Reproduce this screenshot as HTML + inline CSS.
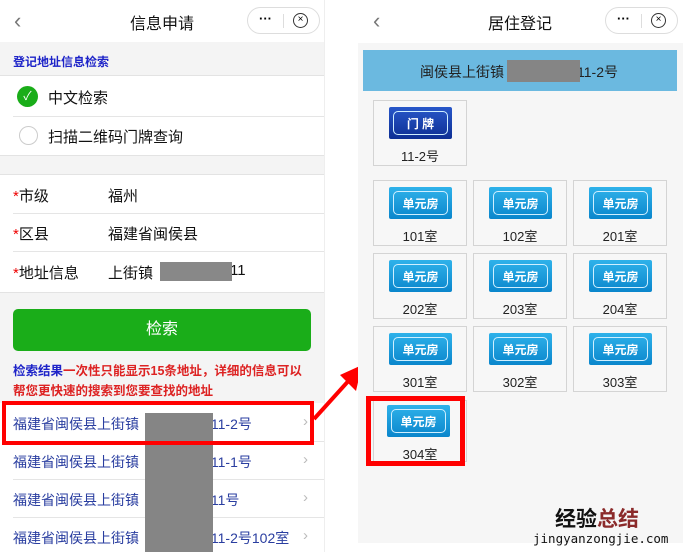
<!DOCTYPE html>
<html><head><meta charset="utf-8"><style>
*{margin:0;padding:0;box-sizing:border-box}
body{width:683px;height:552px;overflow:hidden;background:#fff;font-family:"Liberation Sans","Noto Sans CJK SC",sans-serif;position:relative}
.a{position:absolute}
.t{white-space:nowrap}
.cap{position:absolute;border:1px solid #ddd;border-radius:14px;width:73px;height:27px;top:7px;background:#fff}
.tile{position:absolute;width:94px;height:66px;border:1px solid #d4d4d4;background:#f7f7f7}
.tile .s{position:absolute;left:15px;top:6px;width:63px;height:32px;background:linear-gradient(#2fb2ea,#0a86cc);border-radius:2px}
.tile .s i{position:absolute;left:4px;top:4px;right:4px;bottom:4px;border:1px solid #cfefff;border-radius:5px}
.tile .s b{position:absolute;width:100%;top:8px;text-align:center;color:#fff;font-size:12px}
.tile .l{position:absolute;width:100%;top:45px;text-align:center;font-size:13px;color:#222}
.li{position:absolute;left:13px;font-size:14px;color:#2a3ea0}
.chev{position:absolute;left:303px;color:#bbb;font-size:15px}
.hr{position:absolute;height:1px;background:#e5e5e5}
</style></head><body>
<!-- left -->
<div class="a t" style="left:14px;top:8px;font-size:22px;color:#777">‹</div>
<div class="a t" style="left:130px;top:10px;font-size:16px;color:#111">信息申请</div>
<div class="cap" style="left:247px"><span class="a" style="left:11px;top:3px;font-size:13px;font-weight:bold">···</span><span class="a" style="left:35px;top:6px;width:1px;height:14px;background:#ddd"></span><span class="a" style="left:45px;top:5px;width:15px;height:15px;border:1.5px solid #333;border-radius:50%;font-size:10px;text-align:center;line-height:12px">×</span></div>
<div class="a" style="left:0;top:42px;width:324px;height:34px;background:#f4f4f4;border-bottom:1px solid #e3e3e3"></div>
<div class="a t" style="left:13px;top:53px;font-size:12px;color:#1d23c8;font-weight:bold">登记地址信息检索</div>
<div class="a" style="left:17px;top:86px;width:21px;height:21px;border-radius:50%;background:#1aad19;color:#fff;font-size:12px;text-align:center;line-height:21px">✓</div>
<div class="a t" style="left:48px;top:87px;font-size:15px;color:#111">中文检索</div>
<div class="hr" style="left:13px;top:116px;width:311px"></div>
<div class="a" style="left:19px;top:126px;width:19px;height:19px;border-radius:50%;border:1px solid #ccc"></div>
<div class="a t" style="left:48px;top:126px;font-size:15px;color:#111">扫描二维码门牌查询</div>
<div class="a" style="left:0;top:155px;width:324px;height:20px;background:#f4f4f4;border-top:1px solid #e3e3e3;border-bottom:1px solid #e3e3e3"></div>
<div class="a t" style="left:13px;top:185px;font-size:15px;color:#111"><span style="color:#e00">*</span>市级</div>
<div class="a t" style="left:108px;top:185px;font-size:15px;color:#111">福州</div>
<div class="hr" style="left:13px;top:213px;width:311px"></div>
<div class="a t" style="left:13px;top:223px;font-size:15px;color:#111"><span style="color:#e00">*</span>区县</div>
<div class="a t" style="left:108px;top:223px;font-size:15px;color:#111">福建省闽侯县</div>
<div class="hr" style="left:13px;top:251px;width:311px"></div>
<div class="a t" style="left:13px;top:262px;font-size:15px;color:#111"><span style="color:#e00">*</span>地址信息</div>
<div class="a t" style="left:108px;top:262px;font-size:15px;color:#111">上街镇</div>
<div class="a t" style="left:230px;top:262px;font-size:15px;color:#111">11</div>
<div class="a" style="left:160px;top:262px;width:72px;height:19px;background:#888"></div>
<div class="a" style="left:0;top:292px;width:324px;height:111px;background:#f4f4f4;border-top:1px solid #e3e3e3"></div>
<div class="a" style="left:13px;top:309px;width:298px;height:42px;background:#1aad19;border-radius:5px;color:#fff;font-size:16px;text-align:center;line-height:42px">检索</div>
<div class="a t" style="left:13px;top:361px;font-size:12.5px;color:#d22;line-height:20px;font-weight:bold"><span style="color:#1d23c8">检索结果</span>一次性只能显示15条地址，详细的信息可以<br>帮您更快速的搜索到您要查找的地址</div>
<div class="li t" style="top:414px">福建省闽侯县上街镇</div><div class="li t" style="top:414px;left:207px">:11-2号</div><div class="chev" style="top:413px">›</div>
<div class="hr" style="left:13px;top:441px;width:311px"></div>
<div class="li t" style="top:452px">福建省闽侯县上街镇</div><div class="li t" style="top:452px;left:207px">:11-1号</div><div class="chev" style="top:451px">›</div>
<div class="hr" style="left:13px;top:479px;width:311px"></div>
<div class="li t" style="top:490px">福建省闽侯县上街镇</div><div class="li t" style="top:490px;left:207px">:11号</div><div class="chev" style="top:489px">›</div>
<div class="hr" style="left:13px;top:517px;width:311px"></div>
<div class="li t" style="top:528px">福建省闽侯县上街镇</div><div class="li t" style="top:528px;left:207px">:11-2号102室</div><div class="chev" style="top:527px">›</div>
<div class="a" style="left:145px;top:413px;width:68px;height:139px;background:#858585"></div>
<div class="a" style="left:2px;top:401px;width:312px;height:44px;border:4px solid #f00"></div>
<div class="a" style="left:324px;top:0;width:1px;height:552px;background:#eee"></div>
<!-- arrow -->
<svg class="a" style="left:300px;top:355px" width="70" height="80"><line x1="14" y1="64" x2="52" y2="22" stroke="#f00" stroke-width="4"/><polygon points="62,10 40,20 56,36" fill="#f00"/></svg>
<!-- right -->
<div class="a t" style="left:373px;top:8px;font-size:22px;color:#777">‹</div>
<div class="a t" style="left:488px;top:10px;font-size:16px;color:#111">居住登记</div>
<div class="cap" style="left:605px"><span class="a" style="left:11px;top:3px;font-size:13px;font-weight:bold">···</span><span class="a" style="left:35px;top:6px;width:1px;height:14px;background:#ddd"></span><span class="a" style="left:45px;top:5px;width:15px;height:15px;border:1.5px solid #333;border-radius:50%;font-size:10px;text-align:center;line-height:12px">×</span></div>
<div class="a" style="left:358px;top:43px;width:325px;height:500px;background:#f6f6f6"></div>
<div class="a" style="left:363px;top:50px;width:314px;height:41px;background:#6bb9e0"></div>
<div class="a t" style="left:420px;top:62px;font-size:14px;color:#222">闽侯县上街镇</div>
<div class="a t" style="left:577px;top:62px;font-size:14px;color:#222">11-2号</div>
<div class="a" style="left:507px;top:60px;width:73px;height:22px;background:#858585"></div>
<div class="tile" style="left:373px;top:100px"><div class="s" style="background:linear-gradient(#2857c9,#0d2f94)"><i></i><b>门 牌</b></div><div class="l">11-2号</div></div>
<div class="tile" style="left:373px;top:180px"><div class="s"><i></i><b>单元房</b></div><div class="l">101室</div></div>
<div class="tile" style="left:473px;top:180px"><div class="s"><i></i><b>单元房</b></div><div class="l">102室</div></div>
<div class="tile" style="left:573px;top:180px"><div class="s"><i></i><b>单元房</b></div><div class="l">201室</div></div>
<div class="tile" style="left:373px;top:253px"><div class="s"><i></i><b>单元房</b></div><div class="l">202室</div></div>
<div class="tile" style="left:473px;top:253px"><div class="s"><i></i><b>单元房</b></div><div class="l">203室</div></div>
<div class="tile" style="left:573px;top:253px"><div class="s"><i></i><b>单元房</b></div><div class="l">204室</div></div>
<div class="tile" style="left:373px;top:326px"><div class="s"><i></i><b>单元房</b></div><div class="l">301室</div></div>
<div class="tile" style="left:473px;top:326px"><div class="s"><i></i><b>单元房</b></div><div class="l">302室</div></div>
<div class="tile" style="left:573px;top:326px"><div class="s"><i></i><b>单元房</b></div><div class="l">303室</div></div>
<div class="tile" style="left:373px;top:400px;height:62px"><div class="s" style="left:13px;top:4px"><i></i><b>单元房</b></div><div class="l" style="top:43px">304室</div></div>
<div class="a" style="left:366px;top:396px;width:99px;height:70px;border:5px solid #f00"></div>
<div class="a t" style="left:555px;top:503px;font-size:21px;font-weight:bold;color:#111">经验<span style="color:#8b2a2a">总结</span></div>
<div class="a t" style="left:533px;top:531px;font-size:12.5px;color:#111;font-family:'DejaVu Sans Mono',monospace">jingyanzongjie.com</div>
</body></html>
